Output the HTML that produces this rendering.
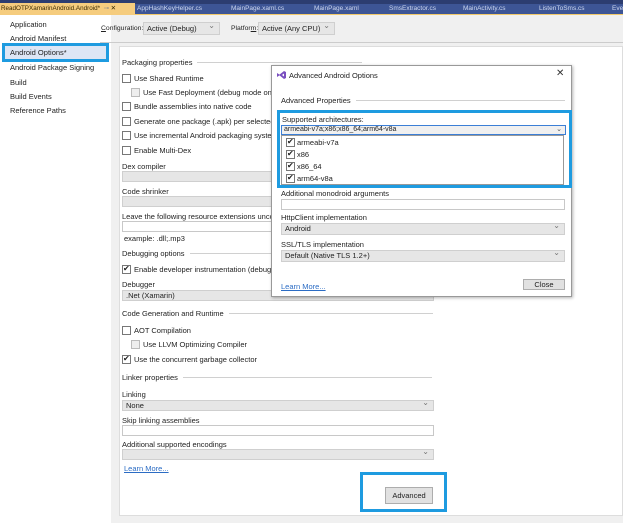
<!DOCTYPE html>
<html><head><style>
*{margin:0;padding:0;box-sizing:border-box}
body{width:623px;height:523px;overflow:hidden;background:#fff;font-family:"Liberation Sans",sans-serif;font-size:7.5px;color:#222;position:relative}
.a{position:absolute;white-space:nowrap}
.cb{position:absolute;width:9px;height:9px;border:1px solid #777;background:#fff}
.cb.d{border-color:#bbb;background:#eee}
.cb.c::after{content:"✔";position:absolute;left:0;top:-2px;font-size:8px;color:#222}
.sel{position:absolute;height:11px;background:#e6e6e6;border:1px solid #cfcfcf;padding-left:3px;line-height:9px}
.sel.arr::after{content:"⌄";position:absolute;right:4px;top:-3px;font-size:8px;color:#777}
.inp{position:absolute;height:11px;background:#fff;border:1px solid #c8c8c8}
.hd{position:absolute;display:flex;align-items:center;white-space:nowrap}
.hd::after{content:"";flex:1;height:1px;background:#d0d0d0;margin-left:5px}
.tab{position:absolute;top:4px;height:10px;line-height:10px;color:#cdd8f0;font-size:6.5px}
</style></head><body>
<div class="a" style="left:0;top:0;width:623px;height:15px;background:#3d5595"></div>
<div class="a" style="left:0;top:0;width:623px;height:4px;background:#2c3d70"></div>
<div class="a" style="left:0;top:14px;width:623px;height:1px;background:#f2c96a"></div>
<div class="a" style="left:0;top:3px;width:135px;height:12px;background:#f5cc7e;line-height:12px;font-size:6.3px;color:#3a2a00;padding-left:1px">ReadOTPXamarinAndroid.Android*&nbsp; <span style="color:#888">⊸</span> ✕</div>
<div class="tab" style="left:137px">AppHashKeyHelper.cs</div>
<div class="tab" style="left:231px">MainPage.xaml.cs</div>
<div class="tab" style="left:314px">MainPage.xaml</div>
<div class="tab" style="left:389px">SmsExtractor.cs</div>
<div class="tab" style="left:463px">MainActivity.cs</div>
<div class="tab" style="left:539px">ListenToSms.cs</div>
<div class="tab" style="left:612px">Even</div>
<div class="a" style="left:10px;top:20px">Application</div>
<div class="a" style="left:10px;top:34px">Android Manifest</div>
<div class="a" style="left:2px;top:43px;width:107px;height:19px;border:3px solid #1e9be0;background:#dde6f5"></div>
<div class="a" style="left:10px;top:48px">Android Options*</div>
<div class="a" style="left:10px;top:63px">Android Package Signing</div>
<div class="a" style="left:10px;top:78px">Build</div>
<div class="a" style="left:10px;top:92px">Build Events</div>
<div class="a" style="left:10px;top:106px">Reference Paths</div>
<div class="a" style="left:111px;top:15px;width:512px;height:508px;background:#f0f0f0"></div>
<div class="a" style="left:101px;top:25px;font-size:6.8px"><u>C</u>onfiguration:</div>
<div class="sel arr" style="left:143px;top:22px;width:77px;height:13px;line-height:11px">Active (Debug)</div>
<div class="a" style="left:231px;top:25px;font-size:6.8px">Platfor<u>m</u>:</div>
<div class="sel arr" style="left:258px;top:22px;width:77px;height:13px;line-height:11px">Active (Any CPU)</div>
<div class="a" style="left:100px;top:42px;width:523px;height:1px;background:#ccc"></div>
<div class="a" style="left:119px;top:46px;width:504px;height:470px;background:#fff;border:1px solid #ddd"></div>
<div class="hd" style="left:122px;top:58px;width:240px">Packaging properties</div>
<div class="cb" style="left:122px;top:74px"></div><div class="a" style="left:134px;top:74px">Use Shared Runtime</div>
<div class="cb d" style="left:131px;top:88px"></div><div class="a" style="left:143px;top:88px">Use Fast Deployment (debug mode only)</div>
<div class="cb" style="left:122px;top:102px"></div><div class="a" style="left:134px;top:102px">Bundle assemblies into native code</div>
<div class="cb" style="left:122px;top:117px"></div><div class="a" style="left:134px;top:117px">Generate one package (.apk) per selected ABI</div>
<div class="cb" style="left:122px;top:131px"></div><div class="a" style="left:134px;top:131px">Use incremental Android packaging system (a</div>
<div class="cb" style="left:122px;top:146px"></div><div class="a" style="left:134px;top:146px">Enable Multi-Dex</div>
<div class="a" style="left:122px;top:162px">Dex compiler</div><div class="sel" style="left:122px;top:171px;width:312px"></div>
<div class="a" style="left:122px;top:187px">Code shrinker</div><div class="sel" style="left:122px;top:196px;width:312px"></div>
<div class="a" style="left:122px;top:212px">Leave the following resource extensions uncompr</div><div class="inp" style="left:122px;top:221px;width:312px"></div>
<div class="a" style="left:124px;top:234px">example: .dll;.mp3</div>
<div class="hd" style="left:122px;top:249px;width:311px">Debugging options</div>
<div class="cb c" style="left:122px;top:265px"></div><div class="a" style="left:134px;top:265px">Enable developer instrumentation (debugging</div>
<div class="a" style="left:122px;top:280px">Debugger</div><div class="sel" style="left:122px;top:290px;width:312px">.Net (Xamarin)</div>
<div class="hd" style="left:122px;top:309px;width:311px">Code Generation and Runtime</div>
<div class="cb" style="left:122px;top:326px"></div><div class="a" style="left:134px;top:326px">AOT Compilation</div>
<div class="cb d" style="left:131px;top:340px"></div><div class="a" style="left:143px;top:340px">Use LLVM Optimizing Compiler</div>
<div class="cb c" style="left:122px;top:355px"></div><div class="a" style="left:134px;top:355px">Use the concurrent garbage collector</div>
<div class="hd" style="left:122px;top:373px;width:310px">Linker properties</div>
<div class="a" style="left:122px;top:390px">Linking</div><div class="sel arr" style="left:122px;top:400px;width:312px">None</div>
<div class="a" style="left:122px;top:416px">Skip linking assemblies</div><div class="inp" style="left:122px;top:425px;width:312px"></div>
<div class="a" style="left:122px;top:440px">Additional supported encodings</div><div class="sel arr" style="left:122px;top:449px;width:312px"></div>
<div class="a" style="left:124px;top:464px;color:#2b6cc4;text-decoration:underline">Learn More...</div>
<div class="a" style="left:360px;top:472px;width:87px;height:40px;border:3px solid #1e9be0;background:#fff"></div>
<div class="a" style="left:385px;top:487px;width:48px;height:17px;background:#e1e1e1;border:1px solid #adadad;text-align:center;line-height:15px">Advanced</div>
<div class="a" style="left:271px;top:65px;width:301px;height:232px;background:#fff;border:1px solid #999;box-shadow:1px 1px 3px rgba(0,0,0,.3)"></div>
<svg class="a" style="left:277px;top:71px" width="9" height="8" viewBox="0 0 9 8"><path d="M0 2 L3 4 L0 6 Z M2 4 L7 0 L9 1 L9 7 L7 8 L2 4 Z" fill="#7a4fc0"/><path d="M5 4 L7 2.5 L7 5.5 Z" fill="#fff"/></svg>
<div class="a" style="left:289px;top:71px">Advanced Android Options</div>
<div class="a" style="left:556px;top:68px;font-size:10px;color:#333">✕</div>
<div class="hd" style="left:281px;top:96px;width:284px">Advanced Properties</div>
<div class="a" style="left:277px;top:110px;width:295px;height:78px;border:3px solid #1e9be0"></div>
<div class="a" style="left:282px;top:115px">Supported architectures:</div>
<div class="a" style="left:281px;top:125px;width:285px;height:10px;border:1px solid #3c7fd6;background:#f0f0f0;line-height:8px;padding-left:2px;font-size:7px">armeabi-v7a;x86;x86_64;arm64-v8a<span style="position:absolute;right:3px;color:#555">⌄</span></div>
<div class="a" style="left:281px;top:135px;width:283px;height:50px;border:1px solid #999;background:#fff"></div>
<div class="cb c" style="left:286px;top:138px"></div><div class="a" style="left:297px;top:138px">armeabi-v7a</div>
<div class="cb c" style="left:286px;top:150px"></div><div class="a" style="left:297px;top:150px">x86</div>
<div class="cb c" style="left:286px;top:162px"></div><div class="a" style="left:297px;top:162px">x86_64</div>
<div class="cb c" style="left:286px;top:174px"></div><div class="a" style="left:297px;top:174px">arm64-v8a</div>
<div class="a" style="left:281px;top:189px">Additional monodroid arguments</div>
<div class="inp" style="left:281px;top:199px;width:284px"></div>
<div class="a" style="left:281px;top:213px">HttpClient implementation</div>
<div class="sel arr" style="left:281px;top:223px;width:284px;height:12px;line-height:10px">Android</div>
<div class="a" style="left:281px;top:240px">SSL/TLS implementation</div>
<div class="sel arr" style="left:281px;top:250px;width:284px;height:12px;line-height:10px">Default (Native TLS 1.2+)</div>
<div class="a" style="left:281px;top:282px;color:#2b6cc4;text-decoration:underline">Learn More...</div>
<div class="a" style="left:523px;top:279px;width:42px;height:11px;background:#e1e1e1;border:1px solid #adadad;text-align:center;line-height:9px">Close</div>
</body></html>
